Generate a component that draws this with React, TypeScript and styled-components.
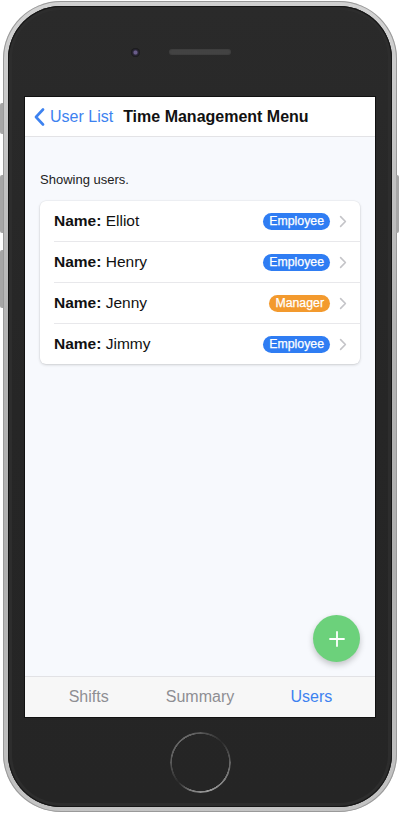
import styled, { createGlobalStyle } from 'styled-components';

const GlobalStyle = createGlobalStyle`
  html, body {
    margin: 0;
    padding: 0;
    background: #ffffff;
  }
  body {
    font-family: "Liberation Sans", Arial, sans-serif;
  }
`;

const Stage = styled.div`
  width: 400px;
  height: 814px;
  padding: 1px 0 0 3px;
  box-sizing: border-box;
`;

const Device = styled.div`
  position: relative;
  width: 394px;
  height: 811px;
  box-sizing: border-box;
  padding: 5px;
  border-radius: 58px;
  background: linear-gradient(180deg, #d2d2d2 0%, #b4b4b4 40%, #b0b0b0 70%, #c4c4c4 100%);
  box-shadow: inset 0 0 0 1px #9a9a9a;
`;

const SideButton = styled.div<{ $side: 'left' | 'right'; $top: number; $h: number }>`
  position: absolute;
  top: ${p => p.$top}px;
  ${p => (p.$side === 'left' ? 'left: -3px;' : 'right: -2px;')}
  width: 3px;
  height: ${p => p.$h}px;
  background: #a6a6a6;
  border-radius: ${p => (p.$side === 'left' ? '2px 0 0 2px' : '0 2px 2px 0')};
`;

const Body = styled.div`
  height: 100%;
  border-radius: 53px;
  background: linear-gradient(180deg, #2a2a2a 0%, #262626 50%, #252525 100%);
  box-shadow: inset 0 0 0 1px #161616, inset 0 0 0 4px #2d2d2d;
  display: flex;
  flex-direction: column;
  align-items: center;
`;

const TopBezel = styled.div`
  height: 91px;
  width: 100%;
  display: grid;
  grid-template-columns: 1fr auto 1fr;
  align-items: center;
  padding-top: 1px;
  box-sizing: border-box;
`;

const Camera = styled.div`
  justify-self: end;
  margin-right: 29px;
  width: 9px;
  height: 9px;
  border-radius: 50%;
  background: radial-gradient(circle at 50% 50%, #6a5d8a 0 1.5px, #2e2a3c 2.5px, #161616 4.5px);
`;

const Speaker = styled.div`
  width: 62px;
  height: 6px;
  border-radius: 3px;
  background-color: #4a4a4a;
  background-image: radial-gradient(#3a3a3a 0.6px, transparent 0.8px);
  background-size: 2px 2px;
  box-shadow: inset 0 0 0 1px #3e3e3e;
`;

const Screen = styled.div`
  position: relative;
  width: 350px;
  height: 620px;
  background: #f7f9fd;
  display: flex;
  flex-direction: column;
  outline: 1px solid #111;
  overflow: hidden;
`;

const NavBar = styled.div`
  height: 40px;
  box-sizing: border-box;
  background: #ffffff;
  border-bottom: 1px solid #e3e3e6;
  display: flex;
  align-items: center;
  padding-left: 9px;
`;

const BackButton = styled.div`
  display: flex;
  align-items: center;
  gap: 5px;
  color: #3d82f0;
  font-size: 16px;
  margin-right: 10px;
`;

const NavTitle = styled.div`
  font-size: 16px;
  font-weight: bold;
  color: #111111;
`;

const Content = styled.div`
  position: relative;
  flex: 1;
  padding: 35px 15px 0;
`;

const Caption = styled.div`
  font-size: 13px;
  line-height: 16px;
  color: #222222;
`;

const Card = styled.div`
  margin-top: 13px;
  background: #ffffff;
  border-radius: 6px;
  box-shadow: 0 1px 3px rgba(0, 0, 0, 0.16), 0 0 0 0.5px rgba(0, 0, 0, 0.05);
  padding-left: 14px;
`;

const Row = styled.div<{ $last?: boolean }>`
  height: ${p => (p.$last ? 40 : 41)}px;
  box-sizing: border-box;
  display: flex;
  align-items: center;
  padding-right: 13px;
  border-bottom: ${p => (p.$last ? 'none' : '1px solid #e8e8eb')};
`;

const Name = styled.div`
  flex: 1;
  font-size: 15.5px;
  color: #111111;
  b {
    font-weight: bold;
  }
`;

const Badge = styled.span<{ $tone: 'blue' | 'orange' }>`
  display: inline-flex;
  align-items: center;
  height: 17px;
  padding: 0 6px;
  border-radius: 9px;
  font-size: 12.3px;
  color: #ffffff;
  -webkit-text-stroke: 0.25px #ffffff;
  background: ${p => (p.$tone === 'blue' ? '#2f7df3' : '#f39a2e')};
  margin-right: 9px;
`;

const Fab = styled.div`
  position: absolute;
  right: 15px;
  bottom: 14px;
  width: 47px;
  height: 47px;
  border-radius: 50%;
  background: #6cd17b;
  box-shadow: 0 3px 6px rgba(0, 0, 0, 0.22);
  display: flex;
  align-items: center;
  justify-content: center;
`;

const TabBar = styled.div`
  height: 41px;
  box-sizing: border-box;
  background: #f7f7f7;
  border-top: 1px solid #e2e2e5;
  display: grid;
  grid-template-columns: 1fr 1fr 1fr;
  align-items: center;
  padding: 0 8px;
`;

const Tab = styled.div<{ $active?: boolean }>`
  text-align: center;
  font-size: 16px;
  color: ${p => (p.$active ? '#3d82f0' : '#8e8e93')};
`;

const BottomBezel = styled.div`
  height: 90px;
  display: flex;
  align-items: center;
  justify-content: center;
`;

const HomeRing = styled.div`
  width: 61px;
  height: 61px;
  border-radius: 50%;
  background: conic-gradient(
    #5a5a5a 0deg,
    #2a2a2a 45deg,
    #6a6a6a 95deg,
    #9a9a9a 165deg,
    #7a7a7a 200deg,
    #2a2a2a 228deg,
    #5e5e5e 275deg,
    #6a6a6a 330deg,
    #5a5a5a 360deg
  );
  -webkit-mask: radial-gradient(circle, transparent 28.3px, #000 28.8px);
  mask: radial-gradient(circle, transparent 28.3px, #000 28.8px);
`;

const users = [
  { name: 'Elliot', role: 'Employee' },
  { name: 'Henry', role: 'Employee' },
  { name: 'Jenny', role: 'Manager' },
  { name: 'Jimmy', role: 'Employee' },
];

function Chevron({ color, w, h, sw }: { color: string; w: number; h: number; sw: number }) {
  return (
    <svg width={w} height={h} viewBox={`0 0 ${w} ${h}`}>
      <polyline
        points={`${sw},${sw} ${w - sw},${h / 2} ${sw},${h - sw}`}
        fill="none"
        stroke={color}
        strokeWidth={sw}
        strokeLinecap="round"
        strokeLinejoin="round"
      />
    </svg>
  );
}

function BackChevron() {
  return (
    <svg width="11" height="18" viewBox="0 0 11 18">
      <polyline points="9,1.5 2,9 9,16.5" fill="none" stroke="#3d82f0" strokeWidth="2.6" strokeLinecap="round" strokeLinejoin="round" />
    </svg>
  );
}

export default function App() {
  return (
    <>
      <GlobalStyle />
      <Stage>
        <Device>
          <SideButton $side="left" $top={102} $h={31} />
          <SideButton $side="left" $top={174} $h={58} />
          <SideButton $side="left" $top={249} $h={58} />
          <SideButton $side="right" $top={174} $h={58} />
          <Body>
            <TopBezel>
              <Camera />
              <Speaker />
              <span />
            </TopBezel>
            <Screen>
              <NavBar>
                <BackButton>
                  <BackChevron />
                  User List
                </BackButton>
                <NavTitle>Time Management Menu</NavTitle>
              </NavBar>
              <Content>
                <Caption>Showing users.</Caption>
                <Card>
                  {users.map((u, i) => (
                    <Row key={u.name} $last={i === users.length - 1}>
                      <Name>
                        <b>Name:</b> {u.name}
                      </Name>
                      <Badge $tone={u.role === 'Manager' ? 'orange' : 'blue'}>{u.role}</Badge>
                      <Chevron color="#c4c4c8" w={8} h={13} sw={1.6} />
                    </Row>
                  ))}
                </Card>
                <Fab>
                  <svg width="16" height="16" viewBox="0 0 16 16">
                    <path d="M8 1v14M1 8h14" stroke="#fff" strokeWidth="1.8" strokeLinecap="round" />
                  </svg>
                </Fab>
              </Content>
              <TabBar>
                <Tab>Shifts</Tab>
                <Tab>Summary</Tab>
                <Tab $active>Users</Tab>
              </TabBar>
            </Screen>
            <BottomBezel>
              <HomeRing />
            </BottomBezel>
          </Body>
        </Device>
      </Stage>
    </>
  );
}
